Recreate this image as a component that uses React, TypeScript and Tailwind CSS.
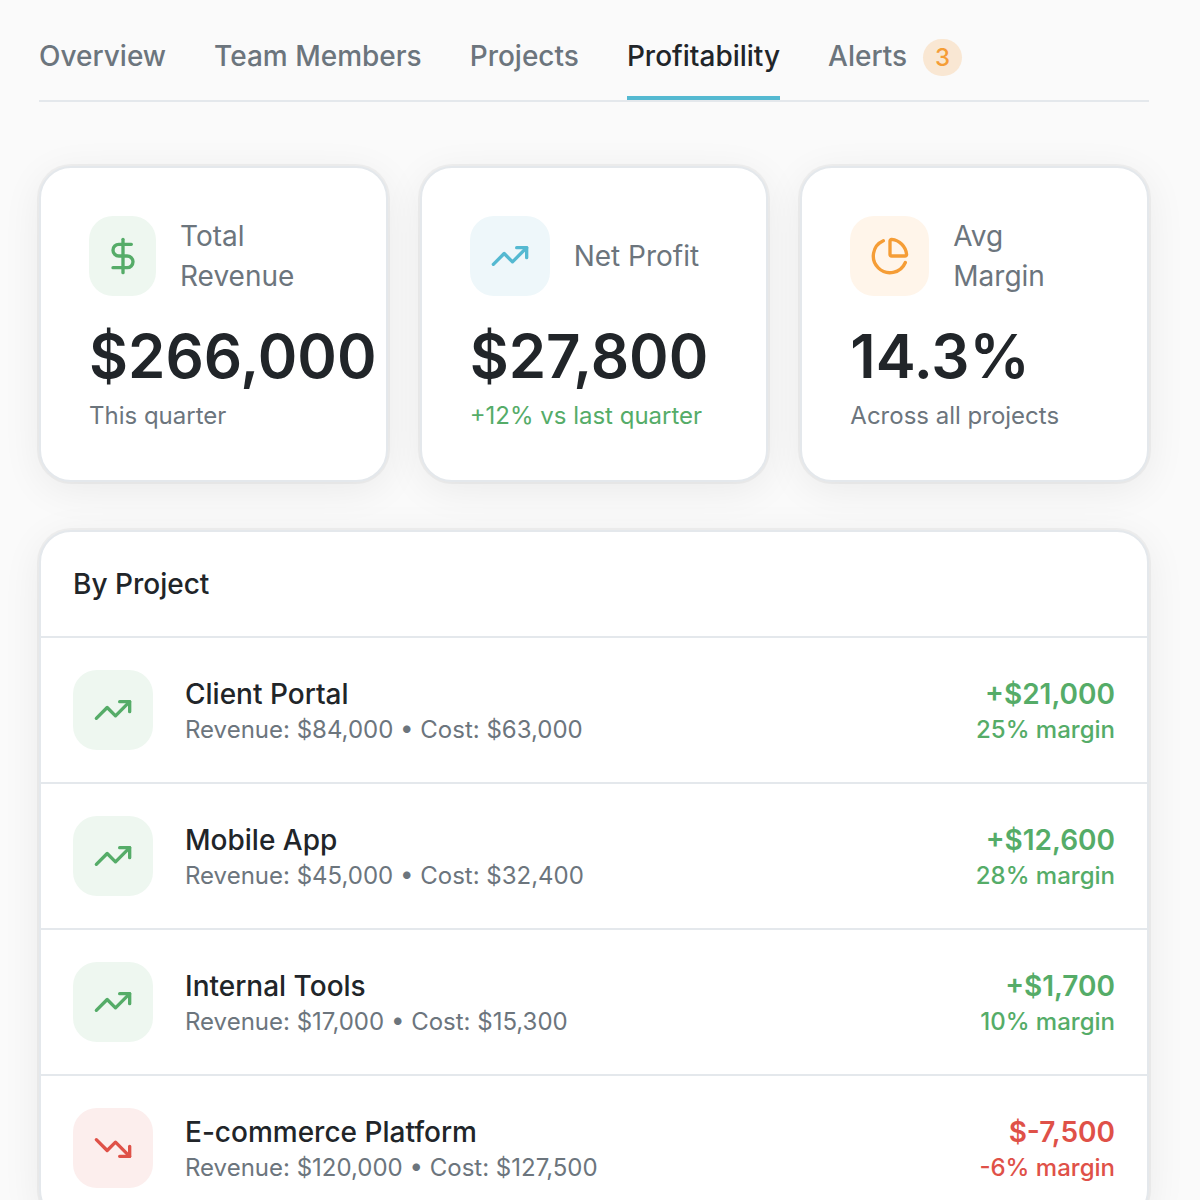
import { ChartPie, DollarSign, TrendingDown, TrendingUp } from "lucide-react";

const TABS = ["Overview", "Team Members", "Projects", "Profitability", "Alerts"];

const STATS = [
  {
    label: "Total Revenue",
    value: "$266,000",
    note: "This quarter",
    icon: DollarSign,
    box: "bg-[#eef7f0] text-[#55ac68] w-[67px]",
    noteColor: "text-[#6c757d]",
  },
  {
    label: "Net Profit",
    value: "$27,800",
    note: "+12% vs last quarter",
    icon: TrendingUp,
    box: "bg-[#eef7fa] text-[#54b9d1] w-20",
    noteColor: "text-[#55ac68]",
  },
  {
    label: "Avg Margin",
    value: "14.3%",
    note: "Across all projects",
    icon: ChartPie,
    box: "bg-[#fff5ea] text-[#f59d36] w-[79px]",
    noteColor: "text-[#6c757d]",
  },
];

const PROJECTS = [
  { name: "Client Portal", revenue: "$84,000", cost: "$63,000", profit: "+$21,000", margin: "25%", up: true },
  { name: "Mobile App", revenue: "$45,000", cost: "$32,400", profit: "+$12,600", margin: "28%", up: true },
  { name: "Internal Tools", revenue: "$17,000", cost: "$15,300", profit: "+$1,700", margin: "10%", up: true },
  { name: "E-commerce Platform", revenue: "$120,000", cost: "$127,500", profit: "$-7,500", margin: "-6%", up: false },
];

const CARD =
  "bg-white border-2 border-[#e4e8ec] rounded-[32px] shadow-[0_0_0_2px_rgba(0,0,0,0.04),0_8px_40px_rgba(0,0,0,0.065)]";

export default function App() {
  return (
    <div className="h-[1200px] overflow-hidden bg-[#fafafa] pl-[39px] pr-[51px] font-['Inter',sans-serif] text-[#212529]">
      <nav className="flex h-[102px] gap-12 border-b-2 border-[#e4e8ec] text-[28px] font-medium text-[#6c757d]">
        {TABS.map((tab) => (
          <div
            key={tab}
            className={`flex h-[100px] items-center whitespace-nowrap ${
              tab === "Profitability" ? "border-b-4 border-[#54b9d1] pt-[15px] text-[#212529]" : "pt-[11px]"
            }`}
          >
            {tab}
            {tab === "Alerts" && (
              <span className="mt-1 ml-4 flex h-[37px] w-[39px] items-center justify-center rounded-full bg-[#f9e7d3] text-2xl text-[#f59d36]">
                3
              </span>
            )}
          </div>
        ))}
      </nav>

      <div className="mt-16 grid grid-cols-3 gap-8">
        {STATS.map(({ label, value, note, icon: Icon, box, noteColor }) => (
          <div key={label} className={`${CARD} h-[316px] min-w-0 px-12 pt-12`}>
            <div className="flex items-center gap-6">
              <div className={`flex h-20 shrink-0 items-center justify-center rounded-3xl ${box}`}>
                <Icon size={40} />
              </div>
              <span className="text-[28px] leading-10 text-[#6c757d]">{label}</span>
            </div>
            <div className="mt-6 text-[60px] leading-[72px] font-semibold">{value}</div>
            <div className={`mt-2 text-2xl leading-8 whitespace-nowrap ${noteColor}`}>{note}</div>
          </div>
        ))}
      </div>

      <div className={`${CARD} mt-12`}>
        <h3 className="flex h-[104px] items-center px-8 text-[28px] font-medium">By Project</h3>
        {PROJECTS.map((p) => (
          <div key={p.name} className="flex h-[146px] items-center gap-8 border-t-2 border-[#e4e8ec] px-8">
            <div
              className={`flex size-20 items-center justify-center rounded-3xl ${
                p.up ? "bg-[#eef7f0] text-[#55ac68]" : "bg-[#fceeed] text-[#df5148]"
              }`}
            >
              {p.up ? <TrendingUp size={40} /> : <TrendingDown size={40} />}
            </div>
            <div className="flex-1">
              <div className="text-[28px] leading-10 font-medium">{p.name}</div>
              <div className="text-2xl leading-8 text-[#6c757d]">
                Revenue: {p.revenue} • Cost: {p.cost}
              </div>
            </div>
            <div className={`text-right ${p.up ? "text-[#55ac68]" : "text-[#df5148]"}`}>
              <div className="text-[28px] leading-10 font-semibold">{p.profit}</div>
              <div className="text-2xl leading-8 font-medium">{p.margin} margin</div>
            </div>
          </div>
        ))}
      </div>
    </div>
  );
}
